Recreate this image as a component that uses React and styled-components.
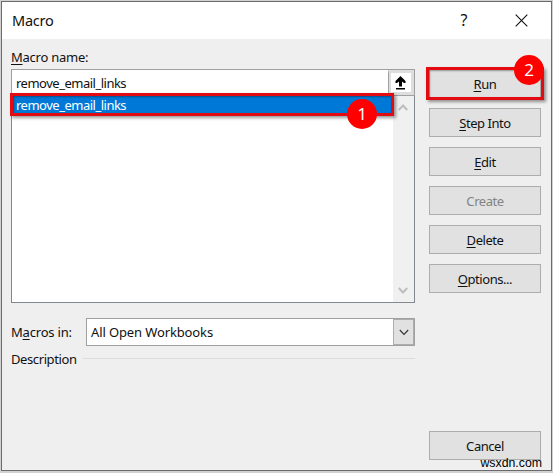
import React from "react";
import styled, { createGlobalStyle } from "styled-components";

const GlobalStyle = createGlobalStyle`
	* {
		box-sizing: border-box;
	}

	body {
		margin: 0;
		background: #d2d2d2;
		font-family: "Noto Sans", sans-serif;
		font-size: 13px;
		color: #111;
	}
`;

const Page = styled.div`
	width: 553px;
	height: 473px;
	padding: 1px 1px 2px;
	overflow: hidden;
	background: #d2d2d2;
`;

const Dialog = styled.div`
	position: relative;
	width: 551px;
	height: 470px;
	border: 1px solid #6b6b6b;
	background: #efefef;
`;

const TitleBar = styled.div`
	display: flex;
	align-items: center;
	height: 37px;
	padding: 0 23px 0 10px;
	background: #fff;
`;

const Title = styled.div`
	flex: 1;
	font-size: 14.5px;
	line-height: 37px;
	letter-spacing: -0.25px;
`;

const HelpMark = styled.div`
	width: 10px;
	margin-right: 46px;
	font-size: 16px;
	line-height: 37px;
	text-align: center;
`;

const Content = styled.div`
	display: flex;
	justify-content: space-between;
	padding: 7px 10px 0 9px;
`;

const MainColumn = styled.div`
	width: 404px;
`;

const Label = styled.label`
	display: block;
	height: 23px;
	line-height: 23px;
	letter-spacing: -0.25px;
	white-space: nowrap;
`;

const NameField = styled.div`
	display: flex;
	justify-content: space-between;
	height: 27px;
	border: 1px solid #a0a0a3;
	background: #fff;
`;

const FieldText = styled.div`
	padding-left: 4px;
	line-height: 26px;
	letter-spacing: ${(props) => props.$spacing || "0"};
`;

const UpButton = styled.div`
	display: flex;
	align-items: center;
	justify-content: center;
	width: 26px;
	border: 3px solid #dedede;
	border-left: 1px solid #a0a0a3;
	box-shadow: inset 2px 0 #dedede;
`;

const List = styled.div`
	position: relative;
	display: flex;
	height: 207px;
	border: 1px solid #828790;
	border-top: none;
	background: #fff;
`;

const ListItems = styled.div`
	flex: 1;
`;

const ListItem = styled.div`
	height: 19px;
	padding-left: 4px;
	background: #0078d7;
	color: #fff;
	line-height: 19px;
	letter-spacing: -0.5px;
`;

const ScrollBar = styled.div`
	display: flex;
	flex-direction: column;
	justify-content: space-between;
	align-items: center;
	width: 21px;
	padding: 8px 1px 8px 0;
	background: #f0f0f0;
`;

const MacrosIn = styled.div`
	display: flex;
	align-items: center;
	margin-top: 15px;
`;

const SelectLabel = styled.div`
	width: 75px;
	letter-spacing: -0.2px;
	white-space: nowrap;
`;

const Select = styled.div`
	display: flex;
	flex: 1;
	justify-content: space-between;
	height: 28px;
	border: 1px solid #a0a0a0;
	background: #fff;
`;

const SelectArrow = styled.div`
	display: flex;
	align-items: center;
	justify-content: center;
	width: 21px;
	border: 1px solid #adadad;
	background: #e1e1e1;
`;

const Description = styled.div`
	display: flex;
	align-items: center;
	height: 25px;
	letter-spacing: -0.4px;
`;

const Rule = styled.div`
	flex: 1;
	height: 1px;
	margin: 0 0 1px 6px;
	background: #dcdcdc;
`;

const ButtonColumn = styled.div`
	display: flex;
	flex-direction: column;
	gap: 10px;
	width: 112px;
	height: 414px;
	margin: 23px 0 0;
`;

const Button = styled.button`
	position: relative;
	height: 29px;
	padding: 0;
	border: 1px solid #adadad;
	background: #e1e1e1;
	color: ${(props) => (props.$disabled ? "#838383" : "#111")};
	font: inherit;
	line-height: 29px;
	letter-spacing: -0.45px;
	margin-top: ${(props) => (props.$last ? "128px" : "0")};
`;

const Highlight = styled.div`
	position: absolute;
	inset: ${(props) => props.$inset};
	border: 3px solid #e30b12;
	box-shadow: 2px 2px 3px rgba(0, 0, 0, 0.4),
		inset 1px 1px 2px rgba(0, 0, 0, 0.35);
`;

const Badge = styled.div`
	position: absolute;
	top: ${(props) => props.$top};
	right: ${(props) => props.$right};
	width: 30px;
	height: 30px;
	border-radius: 50%;
	background: #fe0000;
	color: #fff;
	font-size: 17px;
	line-height: 29px;
	letter-spacing: 0;
	text-align: center;
`;

const Watermark = styled.div`
	position: absolute;
	right: 9px;
	bottom: -1px;
	color: #000;
	font-family: "Liberation Sans", sans-serif;
	font-size: 12.3px;
	line-height: 16px;
`;

const Key = styled.span`
	text-decoration: underline;
	text-decoration-thickness: 1px;
	text-underline-offset: 2px;
`;

const CloseIcon = () => (
	<svg width="13" height="13" viewBox="0 0 13 13" stroke="#111" fill="none">
		<path d="M.7.7l11.6 11.6M12.3.7L.7 12.3" strokeWidth="1.1" />
	</svg>
);

const UpIcon = () => (
	<svg width="11" height="14" viewBox="0 0 11 14" fill="#000">
		<path d="M5.5 0L10.5 5V7H9L7 5.5V10.5H4V5.5L2 7H.5V5z" />
		<path d="M1 12h9v1.5H1z" />
	</svg>
);

const Chevron = ({ up, color, width = 2 }) => (
	<svg width="10" height="7" viewBox="0 0 10 7" fill="none">
		<path
			d={up ? "M.8 6L5 1.5L9.2 6" : "M.8 1L5 5.5L9.2 1"}
			stroke={color}
			strokeWidth={width}
		/>
	</svg>
);

const App = () => {
	return (
		<>
			<GlobalStyle />
			<Page>
				<Dialog>
					<TitleBar>
						<Title>Macro</Title>
						<HelpMark>?</HelpMark>
						<CloseIcon />
					</TitleBar>
					<Content>
						<MainColumn>
							<Label>
								<Key>M</Key>acro name:
							</Label>
							<NameField>
								<FieldText $spacing="-0.5px">remove_email_links</FieldText>
								<UpButton>
									<UpIcon />
								</UpButton>
							</NameField>
							<List>
								<ListItems>
									<ListItem>remove_email_links</ListItem>
								</ListItems>
								<ScrollBar>
									<Chevron up color="#bdbdbd" />
									<Chevron color="#bdbdbd" />
								</ScrollBar>
								<Highlight $inset="-3px 20px 186px -2px" />
								<Badge $top="3px" $right="37px">
									1
								</Badge>
							</List>
							<MacrosIn>
								<SelectLabel>
									M<Key>a</Key>cros in:
								</SelectLabel>
								<Select>
									<FieldText $spacing="-0.12px">All Open Workbooks</FieldText>
									<SelectArrow>
										<Chevron color="#333" width={1.1} />
									</SelectArrow>
								</Select>
							</MacrosIn>
							<Description>
								Description
								<Rule />
							</Description>
						</MainColumn>
						<ButtonColumn>
							<Button>
								<Key>R</Key>un
								<Highlight $inset="-3px -4px -3px -4px" />
								<Badge $top="-15px" $right="-4px">
									2
								</Badge>
							</Button>
							<Button>
								<Key>S</Key>tep Into
							</Button>
							<Button>
								<Key>E</Key>dit
							</Button>
							<Button $disabled>Create</Button>
							<Button>
								<Key>D</Key>elete
							</Button>
							<Button>
								<Key>O</Key>ptions...
							</Button>
							<Button $last>Cancel</Button>
						</ButtonColumn>
					</Content>
					<Watermark>wsxdn.com</Watermark>
				</Dialog>
			</Page>
		</>
	);
};

export default App;
